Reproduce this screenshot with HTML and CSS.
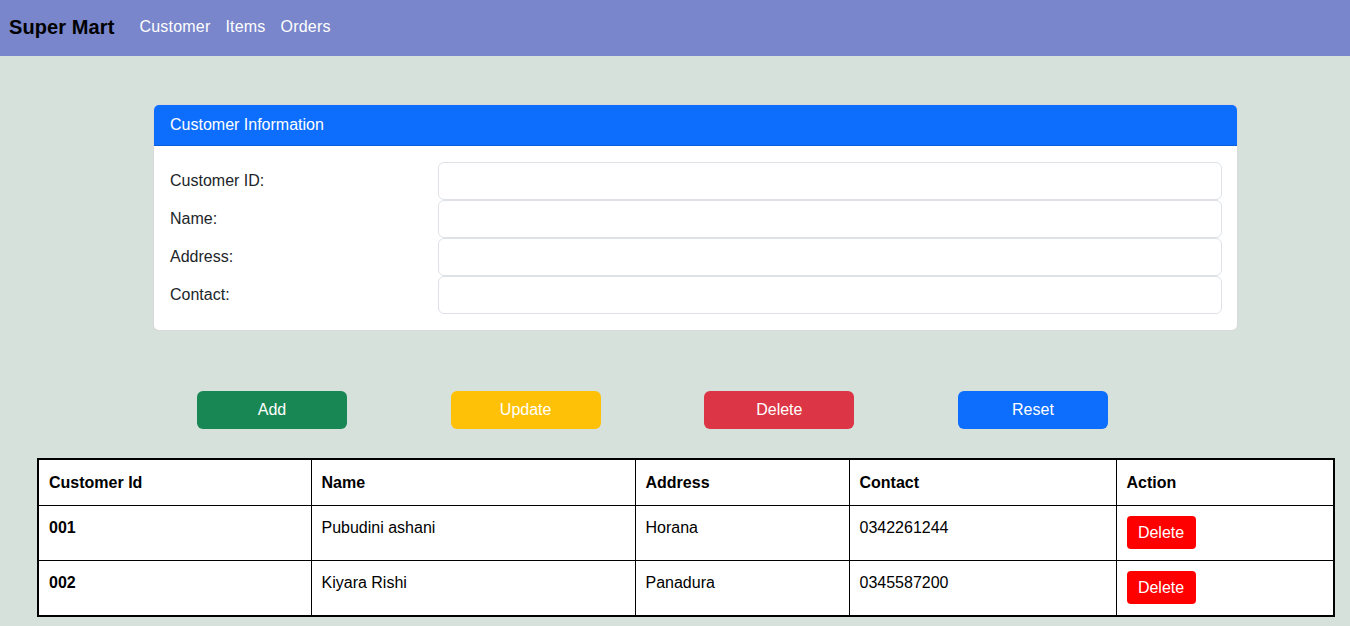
FILE: index.html
```html
<!DOCTYPE html>
<html>
<head>
<meta charset="utf-8">
<link rel="stylesheet" href="styles.css">
</head>
<body>
<nav class="navbar">
  <span class="brand">Super Mart</span>
  <a class="nav-link">Customer</a>
  <a class="nav-link">Items</a>
  <a class="nav-link">Orders</a>
</nav>
<div class="card">
  <div class="card-header">Customer Information</div>
  <div class="card-body">
    <label class="form-label">Customer ID:</label><input class="form-control" type="text">
    <label class="form-label">Name:</label><input class="form-control" type="text">
    <label class="form-label">Address:</label><input class="form-control" type="text">
    <label class="form-label">Contact:</label><input class="form-control" type="text">
  </div>
</div>
<div class="btn-row">
  <button class="btn btn-success">Add</button>
  <button class="btn btn-warning">Update</button>
  <button class="btn btn-danger">Delete</button>
  <button class="btn btn-primary">Reset</button>
</div>
<table class="data-table">
  <colgroup>
    <col class="c1"><col class="c2"><col class="c3"><col class="c4"><col class="c5">
  </colgroup>
  <thead>
    <tr><th>Customer Id</th><th>Name</th><th>Address</th><th>Contact</th><th>Action</th></tr>
  </thead>
  <tbody>
    <tr><th>001</th><td>Pubudini ashani</td><td>Horana</td><td>0342261244</td><td><button class="btn-del">Delete</button></td></tr>
    <tr><th>002</th><td>Kiyara Rishi</td><td>Panadura</td><td>0345587200</td><td><button class="btn-del">Delete</button></td></tr>
  </tbody>
</table>
</body>
</html>
```
FILE: styles.css
```css
* { box-sizing: border-box; }
body {
  margin: 0;
  background: #d7e1dc;
  font-family: "Liberation Sans", Arial, sans-serif;
  font-size: 16px;
  line-height: 1.5;
  color: #212529;
}
.navbar {
  height: 56px;
  background: #7986cb;
  display: flex;
  align-items: center;
  padding: 0 0 2px 9px;
}
.brand {
  font-size: 20px;
  font-weight: bold;
  color: #000;
  margin-right: 25px;
  letter-spacing: 0.1px;
}
.nav-link {
  color: #fff;
  margin-right: 15px;
  letter-spacing: 0.2px;
}
.nav-items {
  letter-spacing: 0.6px;
}
.card {
  margin: 48px 0 0 153px;
  width: 1085px;
  background: #fff;
  border: 1px solid rgba(0,0,0,0.15);
  border-radius: 6px;
  overflow: hidden;
}
.card-header {
  background: #0d6efd;
  color: #fff;
  height: 41px;
  padding: 8px 16px 6px;
  border-bottom: 1px solid #0b5ed7;
}
.card-body {
  padding: 16px 15px 16px 16px;
  display: grid;
  grid-template-columns: 268px 1fr;
  align-items: center;
}
.form-label {
  line-height: 24px;
}
.form-control {
  height: 38px;
  border: 1px solid #dee2e6;
  border-radius: 6px;
  padding: 6px 12px;
  font: inherit;
}
.btn-row {
  display: flex;
  gap: 103.67px;
  margin: 60px 0 0 197px;
}
.btn {
  width: 150px;
  height: 38px;
  border: none;
  border-radius: 6px;
  color: #fff;
  font: inherit;
  padding: 0;
}
.btn-success { background: #198754; }
.btn-warning { background: #ffc107; }
.btn-danger { background: #dc3545; }
.btn-primary { background: #0d6efd; }
.data-table {
  margin: 29px 0 0 37px;
  width: 1296px;
  border-collapse: collapse;
  border: 2px solid #000;
  background: #fff;
  table-layout: fixed;
}
.c1 { width: 273px; }
.c2 { width: 324px; }
.c3 { width: 214px; }
.c4 { width: 267px; }
.c5 { width: 218px; }
.data-table th, .data-table td {
  border: 1px solid #000;
  text-align: left;
  vertical-align: top;
  padding: 10px 10px;
  color: #000;
}
.data-table thead th {
  padding: 11px 10px 10px;
}
.data-table tbody th, .data-table tbody td {
  height: 55px;
  padding-top: 10px;
}
.btn-del {
  background: #ff0000;
  color: #fff;
  border: none;
  border-radius: 4px;
  height: 33px;
  width: 69px;
  font: inherit;
  padding: 0;
}
```
